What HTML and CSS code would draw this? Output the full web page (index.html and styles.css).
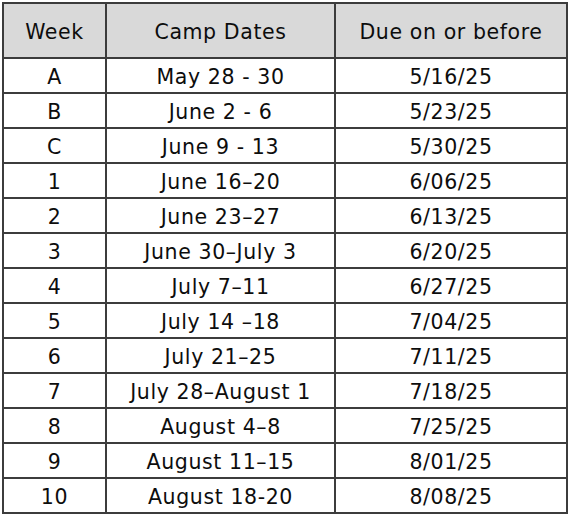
FILE: index.html
```html
<!DOCTYPE html>
<html>
<head>
<meta charset="utf-8">
<link rel="stylesheet" href="styles.css">
</head>
<body>
<div class="table">
  <div class="cell head">Week</div>
  <div class="cell head">Camp Dates</div>
  <div class="cell head">Due on or before</div>

  <div class="cell">A</div><div class="cell">May 28 - 30</div><div class="cell">5/16/25</div>
  <div class="cell">B</div><div class="cell">June 2 - 6</div><div class="cell">5/23/25</div>
  <div class="cell">C</div><div class="cell">June 9 - 13</div><div class="cell">5/30/25</div>
  <div class="cell">1</div><div class="cell">June 16–20</div><div class="cell">6/06/25</div>
  <div class="cell">2</div><div class="cell">June 23–27</div><div class="cell">6/13/25</div>
  <div class="cell">3</div><div class="cell">June 30–July 3</div><div class="cell">6/20/25</div>
  <div class="cell">4</div><div class="cell">July 7–11</div><div class="cell">6/27/25</div>
  <div class="cell">5</div><div class="cell">July 14 –18</div><div class="cell">7/04/25</div>
  <div class="cell">6</div><div class="cell">July 21–25</div><div class="cell">7/11/25</div>
  <div class="cell">7</div><div class="cell">July 28–August 1</div><div class="cell">7/18/25</div>
  <div class="cell">8</div><div class="cell">August 4–8</div><div class="cell">7/25/25</div>
  <div class="cell">9</div><div class="cell">August 11–15</div><div class="cell">8/01/25</div>
  <div class="cell">10</div><div class="cell">August 18-20</div><div class="cell">8/08/25</div>
</div>
</body>
</html>
```
FILE: styles.css
```css
html, body {
  margin: 0;
  padding: 0;
  background: #ffffff;
}
body {
  padding: 2px 0 0 2px;
  font-family: "DejaVu Sans", Verdana, sans-serif;
  font-size: 20.5px;
  letter-spacing: 0.6px;
  color: #0d0d0d;
}
.table {
  display: grid;
  grid-template-columns: 101px 227px 230px;
  grid-template-rows: 53px repeat(13, 33px);
  gap: 2px;
  padding: 2px;
  width: max-content;
  background: #3c3c3c;
}
.cell {
  background: #ffffff;
  display: flex;
  align-items: center;
  justify-content: center;
  white-space: nowrap;
  padding-top: 2px;
}
.head {
  background: #d9d9d9;
}
```
